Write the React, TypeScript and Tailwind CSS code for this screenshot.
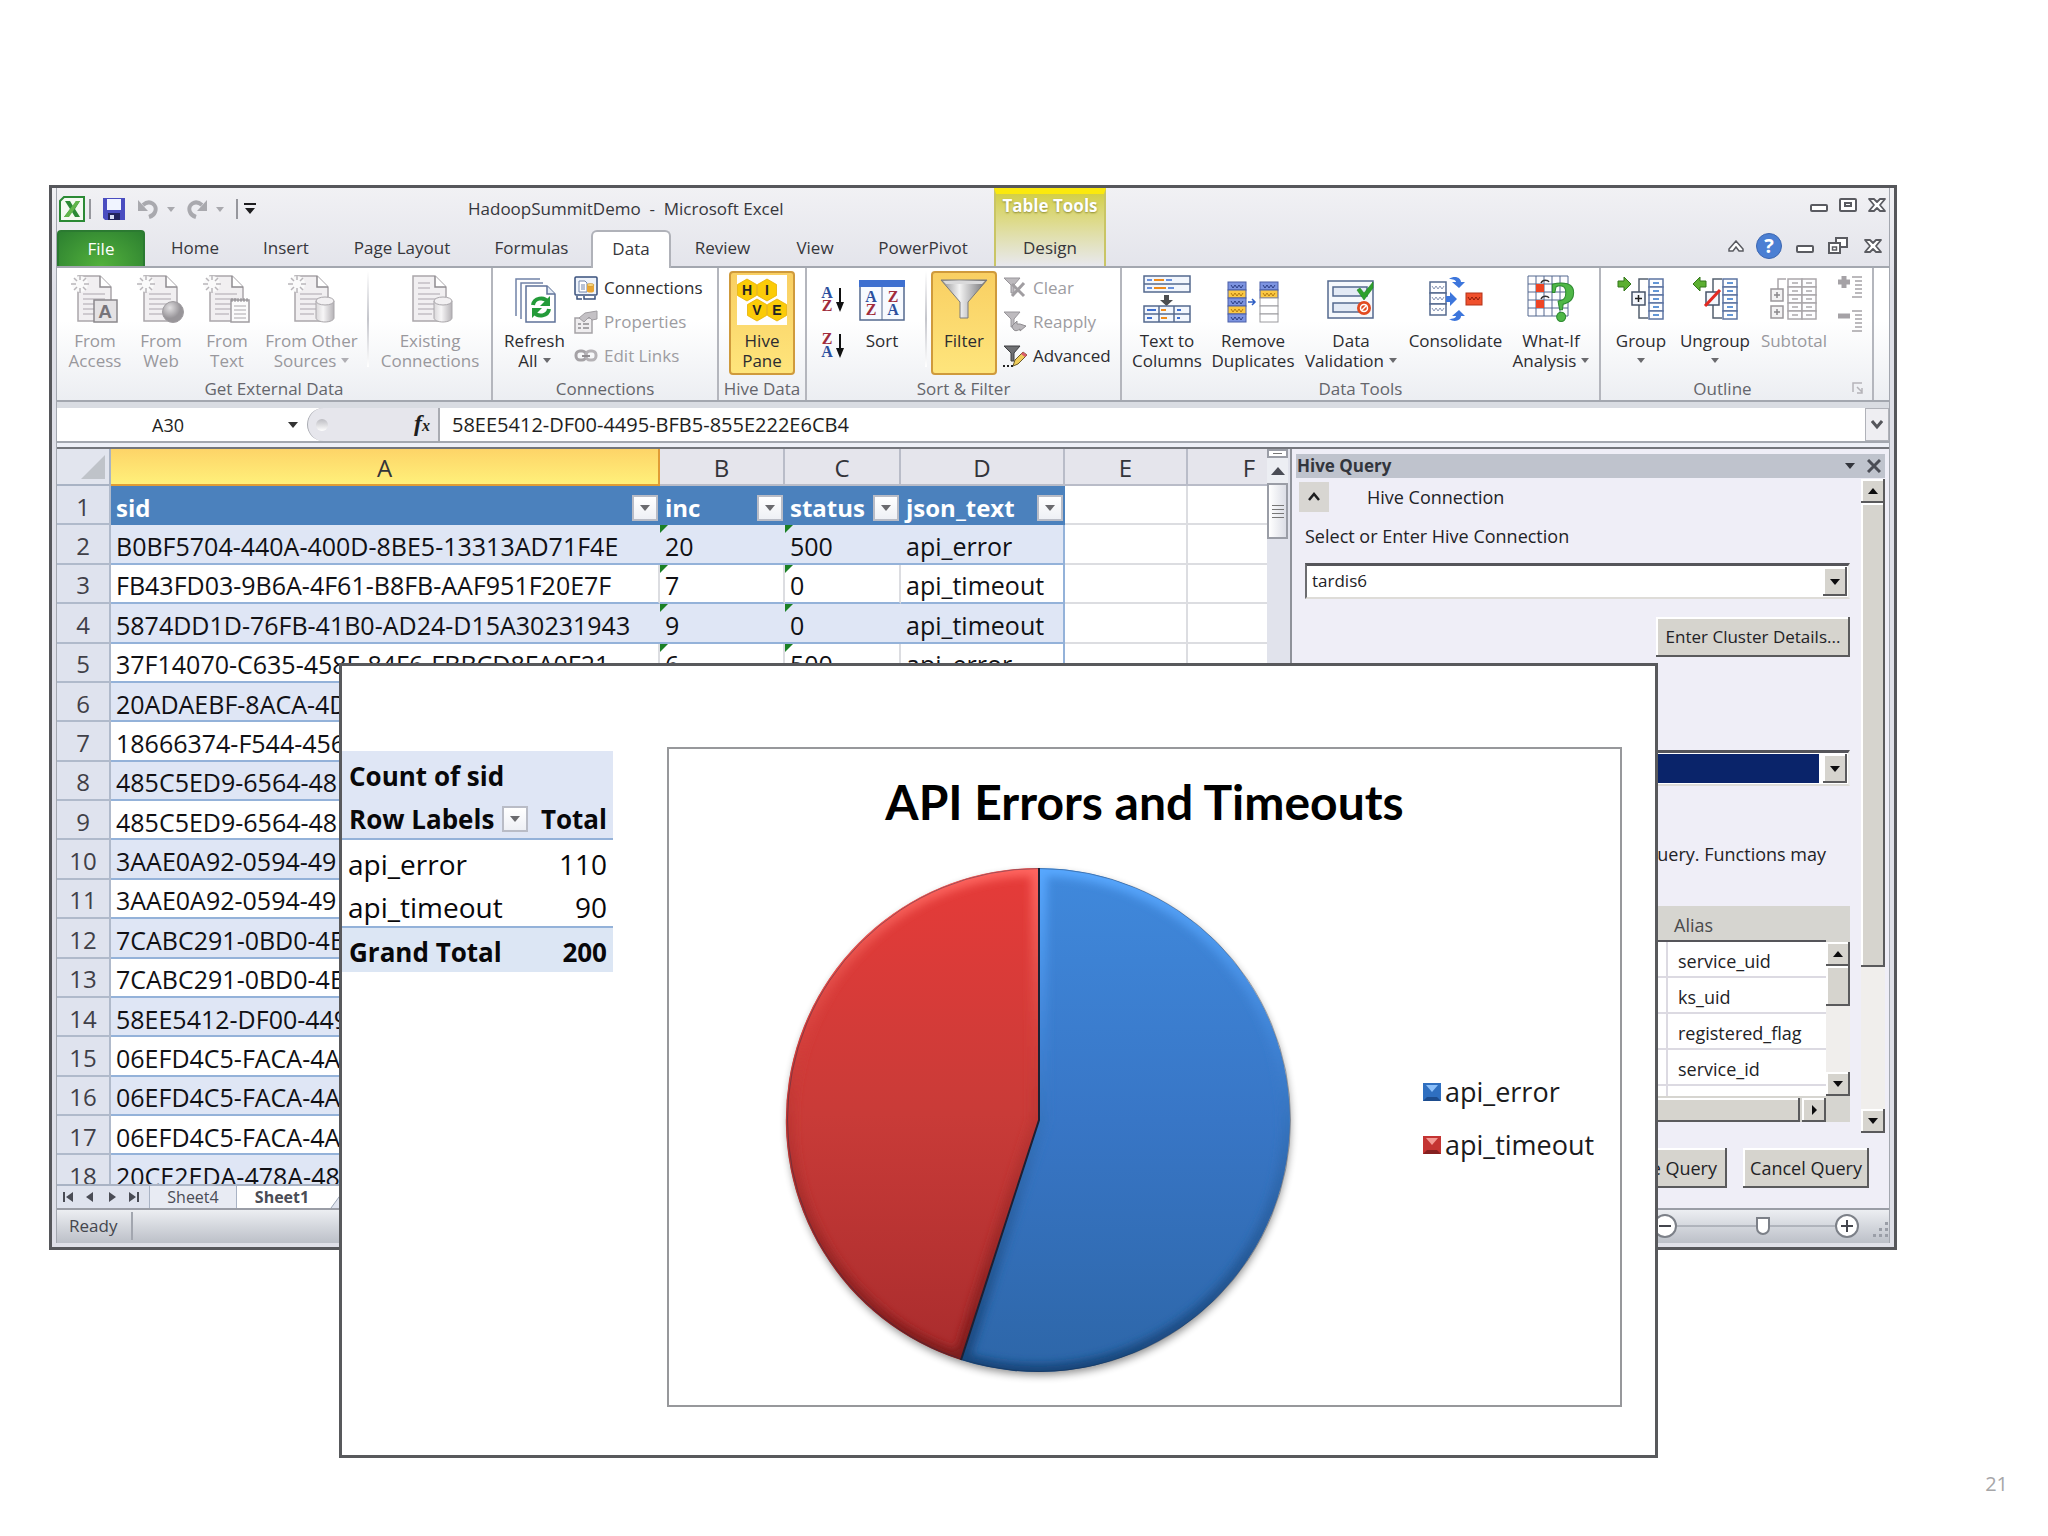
import { FC, ReactNode } from "react";

const BEVEL = "bg-[#d6d4ce] shadow-[inset_-2px_-2px_0_#5a5a5c,inset_2px_2px_0_#ffffff]";

const DocShape: FC<{ children?: ReactNode; spark?: boolean }> = ({ children, spark = true }) => (
    <svg viewBox="0 0 48 48" className="h-12 w-12" fill="none">
        <path d="M7 1h22l11 11v34H7z" fill="#f1eff1" stroke="#aaa7ab" strokeWidth="1.5" />
        <path d="M29 1v11h11" fill="#fff" stroke="#8f8c90" strokeWidth="1.5" />
        <path d="M12 19h22M12 24h22M12 29h22M12 34h18M12 39h14" stroke="#c2bfc3" strokeWidth="1.5" />
        {!spark && <path d="M12 8h12M12 13h12" stroke="#c2bfc3" strokeWidth="1.5" />}
        {spark && (
            <g>
                <circle cx="9" cy="9" r="8" fill="#fafafa" />
                <path d="M9 0v5M9 13v5M0 9h5M13 9h5M3 3l3 3M12 12l3 3M15 3l-3 3M6 12l-3 3" stroke="#b9b6ba" strokeWidth="1.5" />
            </g>
        )}
        {children}
    </svg>
);

const Cylinder = () => (
    <g>
        <path d="M28 26v17c0 2 4 4 9 4s9-2 9-4V26z" fill="url(#cyl)" stroke="#aaa7ab" />
        <ellipse cx="37" cy="26" rx="9" ry="4" fill="#f2f0f2" stroke="#aaa7ab" />
        <defs>
            <linearGradient id="cyl">
                <stop offset="0" stopColor="#d9d7d9" />
                <stop offset=".4" stopColor="#f7f6f7" />
                <stop offset="1" stopColor="#b5b2b6" />
            </linearGradient>
        </defs>
    </g>
);

const AccessIcon = () => (
    <DocShape>
        <rect x="23" y="25" width="23" height="22" fill="#e4e2e4" stroke="#8b888c" strokeWidth="1.5" />
        <text x="34" y="43" textAnchor="middle" fontSize="19" fontWeight="bold" fontFamily="Liberation Sans, sans-serif" fill="#77747a">A</text>
    </DocShape>
);

const WebIcon = () => (
    <DocShape>
        <defs>
            <radialGradient id="globe" cx=".35" cy=".3">
                <stop offset="0" stopColor="#e2e0e2" />
                <stop offset="1" stopColor="#989599" />
            </radialGradient>
        </defs>
        <circle cx="36" cy="37" r="10.5" fill="url(#globe)" stroke="#a09da1" />
    </DocShape>
);

const TextIcon = () => (
    <DocShape>
        <rect x="28" y="25" width="18" height="22" fill="#fbfbfb" stroke="#a09da1" strokeWidth="1.5" />
        <path d="M29 23v4M32 23v4M35 23v4M38 23v4M41 23v4M44 23v4" stroke="#8b888c" />
        <path d="M31 31h12M31 35h12M31 39h12M31 43h12" stroke="#aaa7ab" />
    </DocShape>
);

const SourcesIcon = () => <DocShape><Cylinder /></DocShape>;
const ExistingIcon = () => <DocShape spark={false}><Cylinder /></DocShape>;

const RefreshIcon = () => (
    <svg viewBox="0 0 48 48" className="h-12 w-12" fill="none">
        <path d="M5 41V4h24M10 44V8h22" stroke="#7183a8" strokeWidth="1.5" />
        <path d="M15 11h21l8 8v28H15z" fill="#fff" stroke="#5f7299" strokeWidth="1.5" />
        <path d="M36 11v8h8" fill="#e6ecf6" stroke="#5f7299" strokeWidth="1.5" />
        <path d="M22 30c1-7 11-9 15-3" stroke="#239b39" strokeWidth="4" />
        <path d="M39 21v10H29z" fill="#239b39" />
        <path d="M38 34c-1 7-11 9-15 3" stroke="#239b39" strokeWidth="4" />
        <path d="M21 43V33h10z" fill="#239b39" />
    </svg>
);

const ConnectionsIcon = () => (
    <svg viewBox="0 0 24 24" className="h-6 w-6" fill="none">
        <rect x="1" y="1" width="22" height="18" rx="1" fill="#eef3fb" stroke="#39507c" strokeWidth="1.5" />
        <path d="M5 5h6l2 2v9H5z" fill="#fff" stroke="#7386ab" />
        <path d="M7 9h4M7 11h4M7 13h4" stroke="#7386ab" />
        <path d="M13 9v6c0 2 7 2 7 0V9z" fill="#eaa532" />
        <ellipse cx="16.5" cy="9" rx="3.5" ry="1.5" fill="#fbd67d" stroke="#c08722" strokeWidth=".6" />
        <path d="M3 20v3h5M10 20v3h11v-3" stroke="#39507c" strokeWidth="1.5" />
    </svg>
);

const PropertiesIcon = () => (
    <svg viewBox="0 0 24 24" className="h-6 w-6" fill="none">
        <rect x="1" y="8" width="17" height="15" fill="#efedef" stroke="#a5a2a6" strokeWidth="1.5" />
        <path d="M4 14h3M4 18h3M9 14h6M9 18h6" stroke="#8f8c90" strokeWidth="1.5" />
        <path d="M5 8l6-5 12-2v8l-5 1-3-3-5 5z" fill="#c4c1c5" stroke="#a09da1" />
    </svg>
);

const LinksIcon = () => (
    <svg viewBox="0 0 24 24" className="h-6 w-6" fill="none">
        <rect x="2" y="7" width="10" height="9" rx="4" stroke="#a5a2a6" strokeWidth="3" />
        <rect x="12" y="7" width="10" height="9" rx="4" stroke="#b5b2b6" strokeWidth="3" />
        <path d="M8 12h8" stroke="#8f8c90" strokeWidth="2" />
    </svg>
);

const HEXES = [
    { x: 10, y: 15, t: "H" },
    { x: 30, y: 15, t: "I" },
    { x: 20, y: 35, t: "V" },
    { x: 40, y: 35, t: "E" },
];

const HiveIcon = () => (
    <svg viewBox="0 0 50 50" className="h-[50px] w-[50px]">
        <rect width="50" height="50" fill="#fff" />
        {HEXES.map((h) => (
            <g key={h.t} transform={`translate(${h.x} ${h.y})`}>
                <path d="M0-11l9.5 5.5v11L0 11l-9.500-5.500v-11z" fill="#fbcb08" stroke="#e8b000" strokeWidth=".8" />
                <text y="5" textAnchor="middle" fontSize="14" fontWeight="bold" fontFamily="Liberation Sans, sans-serif" fill="#222">{h.t}</text>
            </g>
        ))}
    </svg>
);

const AZText: FC<{ x: number; top: string; y?: number }> = ({ x, top, y = 0 }) => {
    const bottom = top === "A" ? "Z" : "A";
    return (
        <g fontFamily="Liberation Serif, serif" fontWeight="bold" fontSize="16" textAnchor="middle">
            <text x={x} y={y + 11} fill={top === "A" ? "#2c4f9e" : "#a02c3c"}>{top}</text>
            <text x={x} y={y + 24} fill={bottom === "A" ? "#2c4f9e" : "#a02c3c"}>{bottom}</text>
        </g>
    );
};

const SortSmall: FC<{ top: string }> = ({ top }) => (
    <svg viewBox="-2 -4 28 34" className="h-[34px] w-7 overflow-visible">
        <AZText x={6} top={top} />
        <path d="M19 1v18" stroke="#111" strokeWidth="2" />
        <path d="M15 15h8l-4 10z" fill="#111" />
    </svg>
);

const SortIcon = () => (
    <svg viewBox="0 0 48 48" className="h-12 w-12">
        <rect x="2" y="6" width="44" height="39" fill="#f7faff" stroke="#54698f" strokeWidth="1.5" />
        <rect x="1" y="5" width="46" height="7" fill="#3d6fd0" />
        <path d="M24 12v33" stroke="#54698f" />
        <AZText x={13} top="A" y={16} />
        <AZText x={35} top="Z" y={16} />
    </svg>
);

const FunnelIcon = () => (
    <svg viewBox="0 0 48 48" className="h-12 w-12">
        <defs>
            <linearGradient id="funnel">
                <stop offset="0" stopColor="#8d8d8f" />
                <stop offset=".4" stopColor="#f3f3f3" />
                <stop offset="1" stopColor="#6c6c6f" />
            </linearGradient>
        </defs>
        <path d="M1 5h46L28 27v16h-8V27z" fill="url(#funnel)" stroke="#7a7a7c" />
        <path d="M3 6h42l-3 3H6z" fill="#dadadb" />
    </svg>
);

const SmallFunnel: FC<{ kind: "clear" | "reapply" | "advanced" }> = ({ kind }) => (
    <svg viewBox="0 0 24 24" className="h-6 w-6" fill="none">
        <path d="M1 2h16l-6 7v8H8V9z" fill={kind === "advanced" ? "#6f7073" : "#bdbabe"} stroke={kind === "advanced" ? "#3e3f42" : "#98959a"} />
        {kind === "clear" && <path d="M9 8l12 12M21 7L9 20" stroke="#a09da1" strokeWidth="3" />}
        {kind === "reapply" && <path d="M9 16l5-5v3h3l6 2-6 5v-2c-4 3-7 2-8-3z" fill="#bab7bb" stroke="#8f8c90" />}
        {kind === "advanced" && (
            <g>
                <path d="M10 22l2-6 8-8 4 3-9 9z" fill="#f0cd5a" stroke="#6b5a2b" />
                <path d="M20 8l4 3-2 2-4-3z" fill="#d95b6c" />
                <path d="M0 22h10" stroke="#222" strokeWidth="2" strokeDasharray="2 2" />
            </g>
        )}
    </svg>
);

const TextColumnsIcon = () => (
    <svg viewBox="0 0 48 48" className="h-12 w-12" fill="none">
        <path d="M1 1h46v16H1zM1 9h46" fill="#f2f6fd" stroke="#54698f" strokeWidth="1.5" />
        <path d="M4 5h5M23 5h6M4 13h5M25 13h6" stroke="#3d6fd0" strokeWidth="1.5" />
        <path d="M11 5h10M11 13h12" stroke="#ee8a1c" strokeWidth="2" />
        <path d="M21 20h5v5h4l-6.500 6-6.500-6h4z" fill="#4d4e50" />
        <path d="M1 31h46v16H1zM1 39h46M16 31v16M31 31v16" fill="#f2f6fd" stroke="#54698f" strokeWidth="1.5" />
        <path d="M4 35h9M34 35h4M4 43h5M34 43h3" stroke="#3d6fd0" strokeWidth="2" />
        <path d="M18 35h5M18 43h6" stroke="#ee8a1c" strokeWidth="2" />
    </svg>
);

const Squiggle: FC<{ x: number; y: number; color?: string }> = ({ x, y, color = "#34477f" }) => (
    <path d={`M${x} ${y}l2 3 2-3 2 3 2-3 2 3 2-3`} stroke={color} fill="none" />
);

const DuplicatesIcon = () => (
    <svg viewBox="0 0 52 48" className="h-12 w-[52px]" fill="none">
        {["#7c93e0", "#fbc843", "#7c93e0", "#fbc843", "#7c93e0"].map((fill, i) => (
            <g key={i}>
                <rect x="1" y={7 + i * 8} width="18" height="8" fill={fill} stroke="#4a5fa8" />
                <Squiggle x={4} y={10 + i * 8} color={i % 2 ? "#b47c10" : "#2c3f85"} />
            </g>
        ))}
        <path d="M21 27h6M25 24l3 3-3 3" stroke="#2e5ec4" strokeWidth="1.5" />
        {["#7c93e0", "#fbc843", "#fff", "#fff", "#fff"].map((fill, i) => (
            <g key={i}>
                <rect x="33" y={7 + i * 8} width="18" height="8" fill={fill} stroke={i < 2 ? "#4a5fa8" : "#9a9a9e"} />
                {i < 2 && <Squiggle x={36} y={10 + i * 8} color={i % 2 ? "#b47c10" : "#2c3f85"} />}
            </g>
        ))}
    </svg>
);

const ValidationIcon = () => (
    <svg viewBox="0 0 48 48" className="h-12 w-12" fill="none">
        <rect x="1" y="6" width="45" height="37" fill="#f5f8fc" stroke="#54698f" strokeWidth="1.5" />
        <path d="M6 12h34v9H6zM6 28h34v9H6z" fill="#e3eaf5" stroke="#54698f" strokeWidth="1.5" />
        <path d="M30 15l3-2 4 5 9-11v6l-9 12z" fill="#2ea12c" stroke="#1f8420" strokeWidth=".6" />
        <circle cx="37" cy="33" r="7" fill="#e24a20" />
        <circle cx="37" cy="33" r="3.5" stroke="#fff" strokeWidth="1.5" />
        <path d="M34 36l6-6" stroke="#fff" strokeWidth="1.5" />
    </svg>
);

const ConsolidateIcon = () => (
    <svg viewBox="0 0 54 48" className="h-12 w-[54px]" fill="none">
        {[0, 1, 2].map((i) => (
            <g key={i}>
                <rect x="1" y={7 + i * 11} width="16" height="11" fill="#fff" stroke="#54698f" strokeWidth="1.5" />
                <Squiggle x={3} y={11 + i * 11} color="#8a97b5" />
            </g>
        ))}
        <path d="M17 21h4v-4l7 7-7 7v-4h-4z" fill="#3d76dc" />
        <path d="M20 4c6-4 12-1 12 3h4l-6 6-7-6h4c0-2-3-3-7-3z" fill="#3d76dc" />
        <path d="M20 44c6 4 12 1 12-3h4l-6-6-7 6h4c0 2-3 3-7 3z" fill="#3d76dc" />
        <rect x="37" y="18" width="16" height="12" fill="#f0502c" stroke="#b33318" />
        <Squiggle x={39} y={22} color="#8c1c0a" />
    </svg>
);

const WhatIfIcon = () => (
    <svg viewBox="0 0 50 48" className="h-12 w-[50px] overflow-visible" fill="none">
        <path d="M2 1h40v40H2zM2 9h40M2 17h40M2 25h40M2 33h40M10 1v40M18 1v40M26 1v40M34 1v40" fill="#fdfdff" stroke="#54698f" />
        <path d="M10 9h8v8h-8zM10 25h8v8h-8z" fill="#ee4423" />
        <path d="M15 8c2-4 7-3 8-1M15 24c2-4 7-3 8-1" stroke="#333" strokeWidth="1.5" />
        <text x="37" y="46" textAnchor="middle" fontSize="56" fontWeight="bold" fontFamily="Liberation Serif, serif" fill="#4fb747" stroke="#2d8a30">?</text>
    </svg>
);

const Cells: FC<{ x: number; color: string; dash: string; w?: number }> = ({ x, color, dash, w = 14 }) => (
    <g>
        {[0, 1, 2, 3, 4].map((i) => (
            <g key={i}>
                <rect x={x} y={4 + i * 8} width={w} height="8" fill="#fdfdff" stroke={color} strokeWidth="1.5" />
                <path d={`M${x + 4} ${8 + i * 8}h6`} stroke={dash} strokeWidth="1.5" />
            </g>
        ))}
    </g>
);

const GroupIcon: FC<{ ungroup?: boolean }> = ({ ungroup }) => (
    <svg viewBox="0 0 48 48" className="h-12 w-12" fill="none">
        <path d="M31 4h-9v39h9" stroke="#54606f" strokeWidth="1.5" />
        <Cells x={32} color="#5c74a3" dash="#2f73c9" />
        <rect x="15" y="17" width="13" height="13" fill="#f4f7fc" stroke="#47546a" strokeWidth="1.5" />
        {ungroup ? (
            <path d="M14 31L29 15" stroke="#e32a22" strokeWidth="3" />
        ) : (
            <path d="M18 23.500h7M21.500 20v7" stroke="#222" strokeWidth="1.5" />
        )}
        {ungroup ? (
            <path d="M15 6H9V2L2 9l7 7v-4h6z" fill="#5caf31" stroke="#33771a" />
        ) : (
            <path d="M1 6h6V2l7 7-7 7v-4H1z" fill="#5caf31" stroke="#33771a" />
        )}
    </svg>
);

const SubtotalIcon = () => (
    <svg viewBox="0 0 48 48" className="h-12 w-12" fill="none">
        <path d="M16 4H8v12" stroke="#aaa7ab" strokeWidth="1.5" />
        <Cells x={18} color="#aaa7ab" dash="#aaa7ab" />
        <Cells x={32} color="#aaa7ab" dash="#aaa7ab" />
        <path d="M1 14h12v12H1zM1 31h12v12H1z" fill="#f3f2f3" stroke="#9a979b" strokeWidth="1.5" />
        <path d="M4 20h6M7 17v6M4 37h6M7 34v6" stroke="#8b888c" strokeWidth="1.5" />
    </svg>
);

const DetailIcon: FC<{ plus?: boolean }> = ({ plus }) => (
    <svg viewBox="0 0 24 24" className="h-6 w-6" fill="none">
        <path d="M0 7h12" stroke="#a5a2a6" strokeWidth="5" />
        {plus && <path d="M6 1v12" stroke="#a5a2a6" strokeWidth="5" />}
        <path d="M14 2h10M17 6h7M17 10h7M17 14h7M17 18h7M14 22h10" stroke="#a5a2a6" strokeWidth="1.5" />
    </svg>
);

const Down: FC<{ className?: string }> = ({ className = "h-[6px] w-[10px] text-[#6a6a6e]" }) => (
    <svg viewBox="0 0 10 6" className={`inline-block ${className}`}>
        <path d="M0 0h10L5 6z" fill="currentColor" />
    </svg>
);

interface BigButtonProps {
    icon: ReactNode;
    lines: string[];
    width: string;
    arrow?: boolean;
    disabled?: boolean;
    active?: boolean;
}

const BigButton: FC<BigButtonProps> = ({ icon, lines, width, arrow, disabled, active }) => {
    const arrowClass = `mb-[3px] h-[5px] w-2 ${disabled ? "text-[#b0afb4]" : "text-[#6a6a6e]"}`;
    return (
        <button
            disabled={disabled}
            className={`flex h-[104px] shrink-0 flex-col items-center ${width} ${disabled ? "text-[#99989d]" : "text-[#2c2c30]"} ${
                active ? "rounded border-2 border-[#cf9a3c] bg-linear-to-b from-[#f9cf62] to-[#fee57c] pt-[2px]" : "pt-1"
            }`}
        >
            <span className="flex h-14 items-start">{icon}</span>
            <span className="whitespace-nowrap leading-5">
                {lines.map((line, i) => (
                    <span key={line} className="block">
                        {line}
                        {arrow && i === 1 && <Down className={`ml-[5px] ${arrowClass}`} />}
                    </span>
                ))}
                {arrow && lines.length === 1 && <span className="block"><Down className={arrowClass} /></span>}
            </span>
        </button>
    );
};

const SmallButton: FC<{ icon: ReactNode; label: string; disabled?: boolean }> = ({ icon, label, disabled }) => (
    <button disabled={disabled} className={`flex h-[34px] items-center gap-[6px] whitespace-nowrap ${disabled ? "text-[#9d9ca1]" : "text-[#2c2c30]"}`}>
        {icon}
        {label}
    </button>
);

const RibbonGroup: FC<{ label: string; width: string; pad: string; children: ReactNode; launcher?: boolean }> = ({ label, width, pad, children, launcher }) => (
    <section className={`relative flex shrink-0 flex-col border-r-2 border-[#b4b6bd] ${width}`}>
        <div className={`flex pt-[3px] ${pad}`}>{children}</div>
        <h2 className={`mt-1 text-center leading-5 text-[#64656b] ${launcher ? "pr-7" : ""}`}>{label}</h2>
        {launcher && (
            <svg viewBox="0 0 12 12" className="absolute right-2 bottom-[6px] h-3 w-3" fill="none" stroke="#b5b4b9" strokeWidth="1.5">
                <path d="M1 10V1h9M5 5l5 5M10 6v5H5" />
            </svg>
        )}
    </section>
);

const Separator = () => <div className="mx-1 h-[96px] w-[2px] shrink-0 bg-linear-to-b from-white via-[#c5c6cc] to-white" />;

const Ribbon = () => (
    <div className="flex h-[136px] overflow-hidden border-y-2 border-[#a3a7af] bg-linear-to-b from-white from-40% to-[#eceef2]">
        <RibbonGroup label="Get External Data" width="w-[436px]" pad="pl-[5px]">
            <BigButton icon={<AccessIcon />} lines={["From", "Access"]} width="w-[66px]" disabled />
            <BigButton icon={<WebIcon />} lines={["From", "Web"]} width="w-[66px]" disabled />
            <BigButton icon={<TextIcon />} lines={["From", "Text"]} width="w-[66px]" disabled />
            <BigButton icon={<SourcesIcon />} lines={["From Other", "Sources"]} width="w-[103px]" arrow disabled />
            <Separator />
            <BigButton icon={<ExistingIcon />} lines={["Existing", "Connections"]} width="w-[114px]" disabled />
        </RibbonGroup>
        <RibbonGroup label="Connections" width="w-[226px]" pad="pl-[2px]">
            <BigButton icon={<RefreshIcon />} lines={["Refresh", "All"]} width="w-[79px]" arrow />
            <div className="flex flex-col">
                <SmallButton icon={<ConnectionsIcon />} label="Connections" />
                <SmallButton icon={<PropertiesIcon />} label="Properties" disabled />
                <SmallButton icon={<LinksIcon />} label="Edit Links" disabled />
            </div>
        </RibbonGroup>
        <RibbonGroup label="Hive Data" width="w-[88px]" pad="pl-[10px]">
            <BigButton icon={<HiveIcon />} lines={["Hive", "Pane"]} width="w-[66px]" active />
        </RibbonGroup>
        <RibbonGroup label="Sort &amp; Filter" width="w-[315px]" pad="pl-[12px]">
            <div className="flex w-7 flex-col gap-3 pt-3">
                <button aria-label="Sort A to Z"><SortSmall top="A" /></button>
                <button aria-label="Sort Z to A"><SortSmall top="Z" /></button>
            </div>
            <BigButton icon={<SortIcon />} lines={["Sort"]} width="w-[70px]" />
            <div className="w-1" />
            <Separator />
            <BigButton icon={<FunnelIcon />} lines={["Filter"]} width="w-[66px]" active />
            <div className="ml-[6px] flex flex-col">
                <SmallButton icon={<SmallFunnel kind="clear" />} label="Clear" disabled />
                <SmallButton icon={<SmallFunnel kind="reapply" />} label="Reapply" disabled />
                <SmallButton icon={<SmallFunnel kind="advanced" />} label="Advanced" />
            </div>
        </RibbonGroup>
        <RibbonGroup label="Data Tools" width="w-[479px]" pad="pl-[5px]">
            <BigButton icon={<TextColumnsIcon />} lines={["Text to", "Columns"]} width="w-[80px]" />
            <BigButton icon={<DuplicatesIcon />} lines={["Remove", "Duplicates"]} width="w-[92px]" />
            <BigButton icon={<ValidationIcon />} lines={["Data", "Validation"]} width="w-[104px]" arrow />
            <BigButton icon={<ConsolidateIcon />} lines={["Consolidate"]} width="w-[105px]" />
            <BigButton icon={<WhatIfIcon />} lines={["What-If", "Analysis"]} width="w-[86px]" arrow />
        </RibbonGroup>
        <RibbonGroup label="Outline" width="w-[273px]" pad="pl-[5px]" launcher>
            <BigButton icon={<GroupIcon />} lines={["Group"]} width="w-[70px]" arrow />
            <BigButton icon={<GroupIcon ungroup />} lines={["Ungroup"]} width="w-[78px]" arrow />
            <BigButton icon={<SubtotalIcon />} lines={["Subtotal"]} width="w-[80px]" disabled />
            <div className="ml-1 flex flex-col gap-[10px] pt-1">
                <button aria-label="Show Detail"><DetailIcon plus /></button>
                <button aria-label="Hide Detail"><DetailIcon /></button>
            </div>
        </RibbonGroup>
    </div>
);

const MinimizeIcon = () => (
    <svg viewBox="0 0 20 16" className="h-4 w-5" fill="#fff" stroke="#5a5b61" strokeWidth="2">
        <rect x="2" y="8" width="16" height="6" rx="1" />
    </svg>
);

const MaximizeIcon = () => (
    <svg viewBox="0 0 20 16" className="h-4 w-5" fill="#fff" stroke="#5a5b61" strokeWidth="2">
        <rect x="2" y="2" width="16" height="12" rx="1" />
        <rect x="7" y="6" width="6" height="3" />
    </svg>
);

const RestoreIcon = () => (
    <svg viewBox="0 0 20 18" className="h-[18px] w-5" fill="#fff" stroke="#5a5b61" strokeWidth="2">
        <rect x="8" y="1" width="11" height="9" />
        <rect x="1" y="6" width="11" height="10" />
        <rect x="4.5" y="10" width="4" height="3" strokeWidth="1.5" />
    </svg>
);

const CloseIcon = () => (
    <svg viewBox="0 0 20 16" className="h-4 w-5">
        <path d="M2 2h5l3 3 3-3h5l-5 6 5 6h-5l-3-3-3 3H2l5-6z" fill="#fff" stroke="#5a5b61" strokeWidth="1.8" strokeLinejoin="round" />
    </svg>
);

const QuickAccess = () => (
    <div className="flex items-center">
        <svg viewBox="0 0 26 26" className="h-[26px] w-[26px]">
            <path d="M5 1h20v24H1V5z" fill="#f4faf2" stroke="#2b8a35" strokeWidth="2" />
            <path d="M6 5h5l3 5 3-5h4l-5 8 5 8h-5l-3-5-4 5H5l6-8z" fill="#2b8a35" />
            <path d="M17 5h4L10 21H5z" fill="#62b64b" />
        </svg>
        <div className="ml-1 h-5 w-[2px] bg-[#96979d]" />
        <button aria-label="Save" className="ml-3">
            <svg viewBox="0 0 22 22" className="h-[22px] w-[22px]">
                <path d="M0 0h22v22H2l-2-2z" fill="#4a4dc0" />
                <rect x="4" y="1" width="14" height="11" fill="#f0f4ff" />
                <rect x="5" y="15" width="12" height="7" fill="#23245e" />
                <rect x="7" y="17" width="4" height="4" fill="#d7dcf4" />
            </svg>
        </button>
        <button aria-label="Undo" disabled className="ml-3">
            <svg viewBox="0 0 22 20" className="h-5 w-[22px]" fill="none">
                <path d="M6 6c7-6 15 0 12 7-1 3-3 4-6 5" stroke="#a9a9ae" strokeWidth="4" />
                <path d="M1 1v11h10z" fill="#a9a9ae" />
            </svg>
        </button>
        <Down className="ml-2 h-[5px] w-2 text-[#a9a9ae]" />
        <button aria-label="Redo" disabled className="ml-[11px]">
            <svg viewBox="0 0 22 20" className="h-5 w-[22px]" fill="none">
                <path d="M16 6C9 0 1 6 4 13c1 3 3 4 6 5" stroke="#a9a9ae" strokeWidth="4" />
                <path d="M21 1v11H11z" fill="#a9a9ae" />
            </svg>
        </button>
        <Down className="ml-2 h-[5px] w-2 text-[#a9a9ae]" />
        <div className="ml-3 h-5 w-[2px] bg-[#96979d]" />
        <button aria-label="Customize Quick Access Toolbar" className="ml-[6px]">
            <svg viewBox="0 0 12 12" className="h-3 w-3"><path d="M0 0h12v2H0zM1 5h10l-5 6z" fill="#1e1e20" /></svg>
        </button>
    </div>
);

const TABS = [
    { label: "Home", width: "w-[90px]" },
    { label: "Insert", width: "w-[92px]" },
    { label: "Page Layout", width: "w-[140px]" },
    { label: "Formulas", width: "w-[119px]" },
    { label: "Data", width: "w-[80px]" },
    { label: "Review", width: "w-[103px]" },
    { label: "View", width: "w-[82px]" },
    { label: "PowerPivot", width: "w-[134px]" },
];

const Header = () => (
    <header className="flex h-[78px] text-[#36363b]">
        <div className="flex w-[937px] flex-col">
            <div className="flex h-[42px] items-center pl-[2px]">
                <QuickAccess />
                <h1 className="ml-[212px] whitespace-pre">HadoopSummitDemo  -  Microsoft Excel</h1>
            </div>
            <nav className="flex h-9">
                <button className="mr-[5px] w-[88px] rounded-t border-2 border-b-0 border-[#2b7a31] bg-radial-[at_50%_100%] from-[#53b13c] to-[#2c8030] text-white">File</button>
                {TABS.map((tab) => (
                    <button
                        key={tab.label}
                        className={`${tab.width} ${tab.label === "Data" ? "relative -mb-[2px] rounded-t-md border-2 border-b-0 border-[#b0b2b9] bg-white pb-[2px]" : ""}`}
                    >
                        {tab.label}
                    </button>
                ))}
            </nav>
        </div>
        <div className="flex w-[112px] flex-col items-center border-x-2 border-t-[6px] border-x-[#c9c565] border-t-[#fbe90d] bg-linear-to-b from-[#d3cf45] via-[#dedb8e] via-40% to-[#e8e8ee]">
            <span className="font-bold leading-6 text-white [text-shadow:0_1px_2px_#8d8a30]">Table Tools</span>
            <button className="mt-4 leading-7">Design</button>
        </div>
        <div className="flex flex-1 flex-col items-end">
            <div className="flex h-9 items-center gap-[9px] pr-[2px]">
                <button aria-label="Minimize"><MinimizeIcon /></button>
                <button aria-label="Maximize"><MaximizeIcon /></button>
                <button aria-label="Close"><CloseIcon /></button>
            </div>
            <div className="flex h-[46px] items-center pt-1 pr-[6px]">
                <button aria-label="Minimize the Ribbon" className="mr-3">
                    <svg viewBox="0 0 16 12" className="h-3 w-4"><path d="M1 9l7-8 7 8v2h-4L8 7l-3 4H1z" fill="#fff" stroke="#5a5b61" strokeWidth="1.5" /></svg>
                </button>
                <button aria-label="Help" className="mr-[13px] h-[26px] w-[26px] rounded-full border border-[#3c66b0] bg-[#4b7fd3] text-xl font-bold leading-6 text-white">?</button>
                <button aria-label="Minimize Window" className="mr-[13px]"><MinimizeIcon /></button>
                <button aria-label="Restore Window" className="mr-[15px]"><RestoreIcon /></button>
                <button aria-label="Close Window"><CloseIcon /></button>
            </div>
        </div>
    </header>
);

const FormulaBar = () => (
    <div className="flex h-[35px] border-b-2 border-[#a3a7af] bg-white text-[20px] text-[#1e1e20]">
        <input aria-label="Name Box" defaultValue="A30" className="w-[222px] text-center text-lg" />
        <button aria-label="Names" className="flex w-7 items-center justify-center"><Down className="h-[6px] w-3 text-[#333]" /></button>
        <div className="flex w-[133px] items-center justify-between rounded-l-full border-r-2 border-l border-[#a9abb2] bg-[#e6e6ec] px-2">
            <div className="h-3 w-3 rounded-full bg-linear-to-b from-[#bcbcc2] to-white" />
            <button className="font-['Liberation_Serif',serif] text-2xl font-bold italic leading-6">f<span className="text-base">x</span></button>
        </div>
        <input aria-label="Formula" defaultValue="58EE5412-DF00-4495-BFB5-855E222E6CB4" className="min-w-0 flex-1 pl-3" />
        <button aria-label="Expand Formula Bar" className="flex w-6 items-center justify-center border border-[#b0b2b9] bg-[#eeeef2]">
            <svg viewBox="0 0 12 10" className="h-[10px] w-3" fill="none" stroke="#55565c" strokeWidth="3"><path d="M1 1l5 6 5-6" /></svg>
        </button>
    </div>
);

const COLUMNS = [
    { name: "A", head: "sid" },
    { name: "B", head: "inc" },
    { name: "C", head: "status" },
    { name: "D", head: "json_text" },
];

const ROWS = [
    ["B0BF5704-440A-400D-8BE5-13313AD71F4E", "20", "500", "api_error"],
    ["FB43FD03-9B6A-4F61-B8FB-AAF951F20E7F", "7", "0", "api_timeout"],
    ["5874DD1D-76FB-41B0-AD24-D15A30231943", "9", "0", "api_timeout"],
    ["37F14070-C635-458F-84F6-FBBCD8FA0F21", "6", "500", "api_error"],
    ["20ADAEBF-8ACA-4D", "", "", ""],
    ["18666374-F544-456", "", "", ""],
    ["485C5ED9-6564-48", "", "", ""],
    ["485C5ED9-6564-48", "", "", ""],
    ["3AAE0A92-0594-49", "", "", ""],
    ["3AAE0A92-0594-49", "", "", ""],
    ["7CABC291-0BD0-4E", "", "", ""],
    ["7CABC291-0BD0-4E", "", "", ""],
    ["58EE5412-DF00-449", "", "", ""],
    ["06EFD4C5-FACA-4A", "", "", ""],
    ["06EFD4C5-FACA-4A", "", "", ""],
    ["06EFD4C5-FACA-4A", "", "", ""],
    ["20CE2EDA-478A-48", "", "", ""],
];

const FilterButton: FC<{ label: string }> = ({ label }) => (
    <button aria-label={`Filter ${label}`} className="flex h-[26px] w-[26px] shrink-0 items-center justify-center border-2 border-[#b9bcc6] bg-linear-to-b from-white to-[#eef0f5]">
        <Down />
    </button>
);

const Sheet = () => (
    <table className="h-[746px] w-[1255px] table-fixed border-separate border-spacing-0 text-[25px] leading-8 text-[#101014]">
        <colgroup>
            <col className="w-[54px]" />
            <col className="w-[549px]" />
            <col className="w-[125px]" />
            <col className="w-[116px]" />
            <col className="w-[164px]" />
            <col className="w-[123px]" />
            <col className="w-[124px]" />
        </colgroup>
        <thead>
            <tr className="h-[37px] text-2xl text-[#33343a]">
                <th aria-label="Select All" className="border-r-2 border-b-2 border-[#a9b3c4] bg-[#e2e5ee]">
                    <svg viewBox="0 0 24 24" className="mr-1 ml-auto h-6 w-6"><path d="M24 0v24H0z" fill="#bfc3c9" /></svg>
                </th>
                {["A", "B", "C", "D", "E", "F"].map((name) => (
                    <th
                        key={name}
                        scope="col"
                        className={`border-r-2 border-b-2 pt-[2px] font-normal ${
                            name === "A" ? "border-[#e09c35] bg-linear-to-b from-[#fdd468] to-[#fff07a]" : "border-[#b9bcc8] bg-[#e5e5ec]"
                        }`}
                    >
                        {name}
                    </th>
                ))}
            </tr>
        </thead>
        <tbody>
            <tr className="text-2xl">
                <th scope="row" className="border-r-2 border-b-2 border-[#b0bacb] bg-[#dfe3ee] pt-1 font-normal text-[#3f4048]">1</th>
                {COLUMNS.map((col) => (
                    <th key={col.name} className="bg-[#4b81bd] pt-1 text-left text-white">
                        <div className="flex items-center justify-between pr-[2px] pl-[5px]">
                            {col.head}
                            <FilterButton label={col.head} />
                        </div>
                    </th>
                ))}
                <td className="border-r-2 border-b-2 border-[#dcdde1]" />
                <td className="border-r-2 border-b-2 border-[#dcdde1]" />
            </tr>
            {ROWS.map((row, i) => (
                <tr key={i}>
                    <th scope="row" className="border-r-2 border-b-2 border-[#b0bacb] bg-[#dfe3ee] pt-1 text-2xl font-normal text-[#3f4048]">{i + 2}</th>
                    {row.map((cell, c) => (
                        <td
                            key={c}
                            className={`relative border-b-2 border-b-[#94b2d9] pt-1 pl-[5px] whitespace-nowrap ${i % 2 ? "border-r-2 bg-white" : "bg-[#dfe6f5]"} ${
                                c === 3 ? "border-r-2 border-r-[#94b2d9]" : "border-r-[#dcdde1]"
                            }`}
                        >
                            {cell}
                            {(c === 1 || c === 2) && <span className="absolute top-0 left-0 border-t-8 border-r-8 border-t-[#1b8024] border-r-transparent" />}
                        </td>
                    ))}
                    <td className="border-r-2 border-b-2 border-[#dcdde1]" />
                    <td className="border-r-2 border-b-2 border-[#dcdde1]" />
                </tr>
            ))}
        </tbody>
    </table>
);

const SheetTabs = () => (
    <div className="flex h-6 border-t-2 border-[#a9b3c4] bg-[#dfe3ee] text-base leading-[22px] text-[#4a4c55]">
        <div className="flex w-[92px] items-center justify-around pr-1">
            {["M1 1h2v10H1zM11 1v10L4 6z", "M9 1v10L2 6z", "M3 1v10l7-5z", "M9 1h2v10H9zM1 1v10l7-5z"].map((d, i) => (
                <button key={i} aria-label={["First sheet", "Previous sheet", "Next sheet", "Last sheet"][i]}>
                    <svg viewBox="0 0 12 12" className="h-3 w-3"><path d={d} fill="#4a4c55" /></svg>
                </button>
            ))}
        </div>
        <button className="w-[88px] border-x border-[#a9b3c4] bg-[#e8ebf3]">Sheet4</button>
        <button className="w-[90px] bg-white font-bold">Sheet1</button>
        <svg viewBox="0 0 20 22" className="h-[22px] w-5"><path d="M0 0h20L4 22H0z" fill="#fff" /><path d="M20 0L4 22" stroke="#9aa4b5" /></svg>
    </div>
);

const Arrow: FC<{ dir: "up" | "down" | "right" }> = ({ dir }) => (
    <svg viewBox="0 0 12 12" className="h-3 w-3">
        <path d={dir === "up" ? "M1 9l5-6 5 6z" : dir === "down" ? "M1 3h10L6 9z" : "M4 1v10l5-5z"} fill="#0c0c0e" />
    </svg>
);

const ScrollButton: FC<{ dir: "up" | "down" | "right"; label: string }> = ({ dir, label }) => (
    <button aria-label={label} className={`flex h-6 w-6 shrink-0 items-center justify-center ${BEVEL}`}>
        <Arrow dir={dir} />
    </button>
);

const Combo: FC<{ label: string; value: string; selected?: boolean }> = ({ label, value, selected }) => (
    <div className="flex h-9 border-2 border-t-[3px] border-t-[#55555a] border-r-[#ececec] border-b-[#dedcd8] border-l-[#6c6c70] bg-white p-[1px]">
        <select aria-label={label} className={`min-w-0 flex-1 appearance-none pl-1 text-[17px] ${selected ? "mr-1 bg-[#0a246a] text-white" : ""}`}>
            <option>{value}</option>
        </select>
        <span className={`flex w-6 items-center justify-center ${BEVEL}`}><Arrow dir="down" /></span>
    </div>
);

const FIELDS = ["service_uid", "ks_uid", "registered_flag", "service_id"];

const HivePane = () => (
    <aside className="flex w-[599px] shrink-0 flex-col border-l-2 border-[#8f929a] bg-[#efeef7] pt-[5px] pr-1 pl-1 text-lg text-[#222226]">
        <div className="flex h-6 items-center bg-[#bfc3cd] pr-1 pl-[1px] text-[#33353c]">
            <h2 className="flex-1 text-[17px] font-bold leading-6">Hive Query</h2>
            <button aria-label="Pane options" className="mr-3 flex items-center"><Down className="h-[6px] w-[10px] text-[#33353c]" /></button>
            <button aria-label="Close pane">
                <svg viewBox="0 0 14 14" className="h-[14px] w-[14px]" stroke="#4a4c55" strokeWidth="3"><path d="M1 1l12 12M13 1L1 13" /></svg>
            </button>
        </div>
        <div className="mt-[1px] flex h-[654px]">
            <div className="flex-1 pr-[11px] pl-[9px]">
                <div className="-ml-[6px] flex items-center pt-[3px]">
                    <button aria-label="Collapse" className="flex h-[30px] w-[30px] items-center justify-center bg-[#d8d6d2]">
                        <svg viewBox="0 0 12 10" className="h-[10px] w-3" fill="none" stroke="#1e1e20" strokeWidth="2.5"><path d="M1 8l5-6 5 6" /></svg>
                    </button>
                    <h3 className="ml-[38px]">Hive Connection</h3>
                </div>
                <p className="mt-3 mb-[15px] leading-6">Select or Enter Hive Connection</p>
                <Combo label="Hive Connection" value="tardis6" />
                <div className="mt-[18px] mb-[93px] flex justify-end">
                    <button className={`h-10 w-[194px] whitespace-nowrap text-[17px] ${BEVEL}`}>Enter Cluster Details...</button>
                </div>
                <Combo label="Hive Table" value="" selected />
                <p className="mt-14 mb-[40px] pr-6 text-right leading-6">query. Functions may</p>
                <div className="flex h-[216px] bg-[#d6d5d0]">
                    <div className="flex flex-1 flex-col">
                        <div className="flex-1 overflow-hidden">
                            <table className="w-full table-fixed border-separate border-spacing-0 bg-white leading-6">
                                <thead>
                                    <tr className="h-9 bg-[#d6d5d0] text-left text-[#4a4a4c]">
                                        <th className="w-[363px] border-b-2 border-[#55555a] pt-1 font-normal">Column</th>
                                        <th className="border-b-2 border-[#55555a] pt-1 pl-[6px] font-normal">Alias</th>
                                    </tr>
                                </thead>
                                <tbody>
                                    {[...FIELDS, ""].map((f) => (
                                        <tr key={f} className="h-9">
                                            <td className="border-r-2 border-b-2 border-[#dcdae2] pt-1">{f}</td>
                                            <td className="border-b-2 border-[#dcdae2] pt-1 pl-[10px]">{f}</td>
                                        </tr>
                                    ))}
                                </tbody>
                            </table>
                        </div>
                        <div className="mt-[2px] flex">
                            <div className={`mr-[2px] flex-1 ${BEVEL}`} />
                            <ScrollButton dir="right" label="Scroll right" />
                        </div>
                    </div>
                    <div className="mt-9 mb-[26px] flex flex-col bg-[#f0eeec]">
                        <ScrollButton dir="up" label="Scroll list up" />
                        <div className={`mb-auto h-10 w-6 ${BEVEL}`} />
                        <ScrollButton dir="down" label="Scroll list down" />
                    </div>
                </div>
            </div>
            <div className="flex w-6 flex-col bg-[#f0eeec]">
                <ScrollButton dir="up" label="Scroll up" />
                <div className={`mb-auto h-[464px] ${BEVEL}`} />
                <ScrollButton dir="down" label="Scroll down" />
            </div>
        </div>
        <div className="mt-[15px] flex justify-end gap-4 pr-4">
            <button className={`h-10 w-[142px] whitespace-nowrap ${BEVEL}`}>Execute Query</button>
            <button className={`h-10 w-[126px] whitespace-nowrap ${BEVEL}`}>Cancel Query</button>
        </div>
    </aside>
);

const StatusBar = () => (
    <footer className="flex h-[35px] items-center justify-between border-t-2 border-[#9a9da6] bg-linear-to-b from-[#eceef2] to-[#bcc0c8] pb-[2px] pl-3 text-[#44464d]">
        <div className="flex items-center gap-[14px]">
            Ready
            <div className="h-7 w-[2px] bg-[#a2a6af]" />
        </div>
        <div className="flex items-center">
            <button aria-label="Zoom out" className="flex h-6 w-6 items-center justify-center rounded-full border-2 border-[#7c8088] bg-white">
                <svg viewBox="0 0 12 12" className="h-3 w-3" stroke="#44464d" strokeWidth="2"><path d="M0 6h12" /></svg>
            </button>
            <input
                type="range"
                aria-label="Zoom"
                defaultValue={55}
                className="h-5 w-[158px] appearance-none bg-linear-to-b from-transparent from-45% via-[#8c919b] via-50% to-transparent to-55% [&::-webkit-slider-thumb]:h-[18px] [&::-webkit-slider-thumb]:w-[14px] [&::-webkit-slider-thumb]:appearance-none [&::-webkit-slider-thumb]:rounded-b-lg [&::-webkit-slider-thumb]:border-2 [&::-webkit-slider-thumb]:border-[#7c8088] [&::-webkit-slider-thumb]:bg-white"
            />
            <button aria-label="Zoom in" className="flex h-6 w-6 items-center justify-center rounded-full border-2 border-[#7c8088] bg-white">
                <svg viewBox="0 0 12 12" className="h-3 w-3" stroke="#44464d" strokeWidth="2"><path d="M0 6h12M6 0v12" /></svg>
            </button>
            <svg viewBox="0 0 18 18" className="mt-2 ml-3 h-[18px] w-[18px]" fill="#9a9ea7">
                <path d="M14 1h3v3h-3zM14 7h3v3h-3zM8 7h3v3H8zM14 13h3v3h-3zM8 13h3v3H8zM2 13h3v3H2z" />
            </svg>
        </div>
    </footer>
);

const ExcelWindow = () => (
    <div className="border-[3px] border-[#56575b] bg-linear-to-b from-[#f1f1f4] to-[#dfe0e8] to-10% px-1 pb-1">
        <div className="border-r border-l border-[#a3a7af]">
            <Header />
            <Ribbon />
            <div className="h-[6px] bg-[#d9dce2]" />
            <FormulaBar />
            <div className="h-1 bg-[#eef0f7]" />
            <div className="flex h-[761px] border-t-2 border-[#74767c]">
                <div className="flex min-w-0 flex-1 flex-col">
                    <div className="flex min-h-0 flex-1">
                        <div className="flex-1 overflow-hidden bg-white"><Sheet /></div>
                        <div className="flex w-[23px] shrink-0 flex-col bg-[#e1e3ec] pr-[2px]">
                            <div className="flex h-[9px] items-center border-2 border-[#9a9da6] bg-white px-1"><div className="h-[1px] flex-1 bg-[#777]" /></div>
                            <button aria-label="Scroll sheet up" className="flex h-[25px] items-center justify-center bg-[#eceef3]">
                                <svg viewBox="0 0 14 8" className="h-2 w-[14px]"><path d="M0 8L7 0l7 8z" fill="#4a4c55" /></svg>
                            </button>
                            <div className="flex h-14 flex-col items-center justify-center gap-[3px] border-2 border-[#9a9da6] bg-linear-to-r from-white to-[#dcdee6]">
                                <div className="h-[1px] w-3 bg-[#777]" />
                                <div className="h-[1px] w-3 bg-[#777]" />
                                <div className="h-[1px] w-3 bg-[#777]" />
                                <div className="h-[1px] w-3 bg-[#777]" />
                            </div>
                        </div>
                    </div>
                    <SheetTabs />
                </div>
                <HivePane />
            </div>
            <StatusBar />
        </div>
    </div>
);

// slices start at twelve o'clock and run clockwise: 110 of 200, then 90 of 200
const BLUE_SLICE = "M260 260V8A252 252 0 1 1 182 500Z";
const RED_SLICE = "M260 260L182 500A252 252 0 0 1 260 8Z";

const Pie = () => (
    <svg viewBox="0 0 520 530" className="h-[530px] w-[520px] shrink-0" role="img" aria-label="API Errors and Timeouts">
        <defs>
            <linearGradient id="blue" x1="0" y1="0" x2="0" y2="1">
                <stop offset="0" stopColor="#4089dc" />
                <stop offset=".5" stopColor="#3876c6" />
                <stop offset="1" stopColor="#2d66a8" />
            </linearGradient>
            <linearGradient id="red" x1="0" y1="0" x2="0" y2="1">
                <stop offset="0" stopColor="#e63b39" />
                <stop offset=".5" stopColor="#c93b38" />
                <stop offset="1" stopColor="#a92c2d" />
            </linearGradient>
            <linearGradient id="rimBlue" x1="0" y1="0" x2="0" y2="1">
                <stop offset="0" stopColor="#58a8ff" />
                <stop offset=".35" stopColor="#3f82d4" />
                <stop offset="1" stopColor="#174478" />
            </linearGradient>
            <linearGradient id="rimRed" x1="0" y1="0" x2="0" y2="1">
                <stop offset="0" stopColor="#ff6660" />
                <stop offset=".35" stopColor="#d43f3b" />
                <stop offset="1" stopColor="#7c1a1b" />
            </linearGradient>
            <filter id="soft" x="-10%" y="-10%" width="120%" height="120%"><feGaussianBlur stdDeviation="4" /></filter>
            <clipPath id="clipBlue"><path d={BLUE_SLICE} /></clipPath>
            <clipPath id="clipRed"><path d={RED_SLICE} /></clipPath>
        </defs>
        <circle cx="260" cy="264" r="251" fill="#000" opacity=".45" filter="url(#soft)" />
        <g clipPath="url(#clipBlue)">
            <path d={BLUE_SLICE} fill="url(#blue)" />
            <path d={BLUE_SLICE} fill="none" stroke="url(#rimBlue)" strokeWidth="16" filter="url(#soft)" />
        </g>
        <g clipPath="url(#clipRed)">
            <path d={RED_SLICE} fill="url(#red)" />
            <path d={RED_SLICE} fill="none" stroke="url(#rimRed)" strokeWidth="16" filter="url(#soft)" />
        </g>
        <circle cx="260" cy="260" r="251.5" fill="none" stroke="#1c2c48" strokeOpacity=".4" />
        <path d="M260 8V260L182 500" fill="none" stroke="#1d2033" strokeWidth="2" />
    </svg>
);

const Marker: FC<{ base: string; light: string; dark: string }> = ({ base, light, dark }) => (
    <svg viewBox="0 0 18 18" className="h-[18px] w-[18px]">
        <rect width="18" height="18" fill={base} />
        <path d="M0 18h18l-4-4H4z" fill={dark} />
        <path d="M3 2h12L9 9z" fill={light} />
    </svg>
);

const PivotPanel = () => (
    <div className="absolute top-[663px] right-[390px] left-[339px] flex items-start border-[3px] border-[#58595c] bg-white pr-[33px] pb-12">
        <table className="mt-[85px] w-[271px] shrink-0 border-separate border-spacing-0 text-[26px] leading-8 text-[#08080a]">
            <thead className="bg-[#dfe6f5] text-left">
                <tr className="h-[45px]">
                    <th colSpan={2} className="pt-1 pl-[7px]">Count of sid</th>
                </tr>
                <tr className="h-11">
                    <th className="border-b-2 border-[#94b2d9] pt-1 pl-[7px] whitespace-nowrap">
                        <div className="flex items-center gap-2">
                            Row Labels
                            <FilterButton label="Row Labels" />
                        </div>
                    </th>
                    <th className="border-b-2 border-[#94b2d9] pt-1 pr-[6px] text-right">Total</th>
                </tr>
            </thead>
            <tbody className="text-[28px]">
                <tr className="h-11">
                    <td className="pt-1 pl-[6px]">api_error</td>
                    <td className="pt-1 pr-[6px] text-right">110</td>
                </tr>
                <tr className="h-11">
                    <td className="border-b-2 border-[#94b2d9] pt-1 pl-[6px]">api_timeout</td>
                    <td className="border-b-2 border-[#94b2d9] pt-1 pr-[6px] text-right">90</td>
                </tr>
                <tr className="h-11 bg-[#dce6f4] text-left text-[26px]">
                    <th className="pt-1 pl-[7px]">Grand Total</th>
                    <th className="pt-1 pr-[6px] text-right">200</th>
                </tr>
            </tbody>
        </table>
        <figure className="mt-[81px] ml-[54px] flex h-[660px] flex-1 flex-col border-2 border-[#97989b]">
            <figcaption className="pt-[19px] text-center font-[Lato,sans-serif] text-5xl leading-[68px] font-bold text-black">API Errors and Timeouts</figcaption>
            <div className="flex items-start pt-6 pl-[110px]">
                <Pie />
                <ul className="mt-[216px] ml-[124px] flex flex-col gap-[21px] text-[27px] leading-8 text-[#1a1a1c]">
                    <li className="flex items-center gap-1"><Marker base="#2f6fc0" light="#8cc0fa" dark="#1d4c8d" />api_error</li>
                    <li className="flex items-center gap-1"><Marker base="#c43432" light="#f49a94" dark="#852020" />api_timeout</li>
                </ul>
            </div>
        </figure>
    </div>
);

export default function App() {
    return (
        <div className="relative min-h-screen bg-white pt-[185px] pr-[151px] pl-[49px] font-['Open_Sans','Noto_Sans',sans-serif] text-[17px]">
            <ExcelWindow />
            <PivotPanel />
            <span className="absolute right-10 bottom-[38px] text-xl text-[#a6a6a8]">21</span>
        </div>
    );
}
